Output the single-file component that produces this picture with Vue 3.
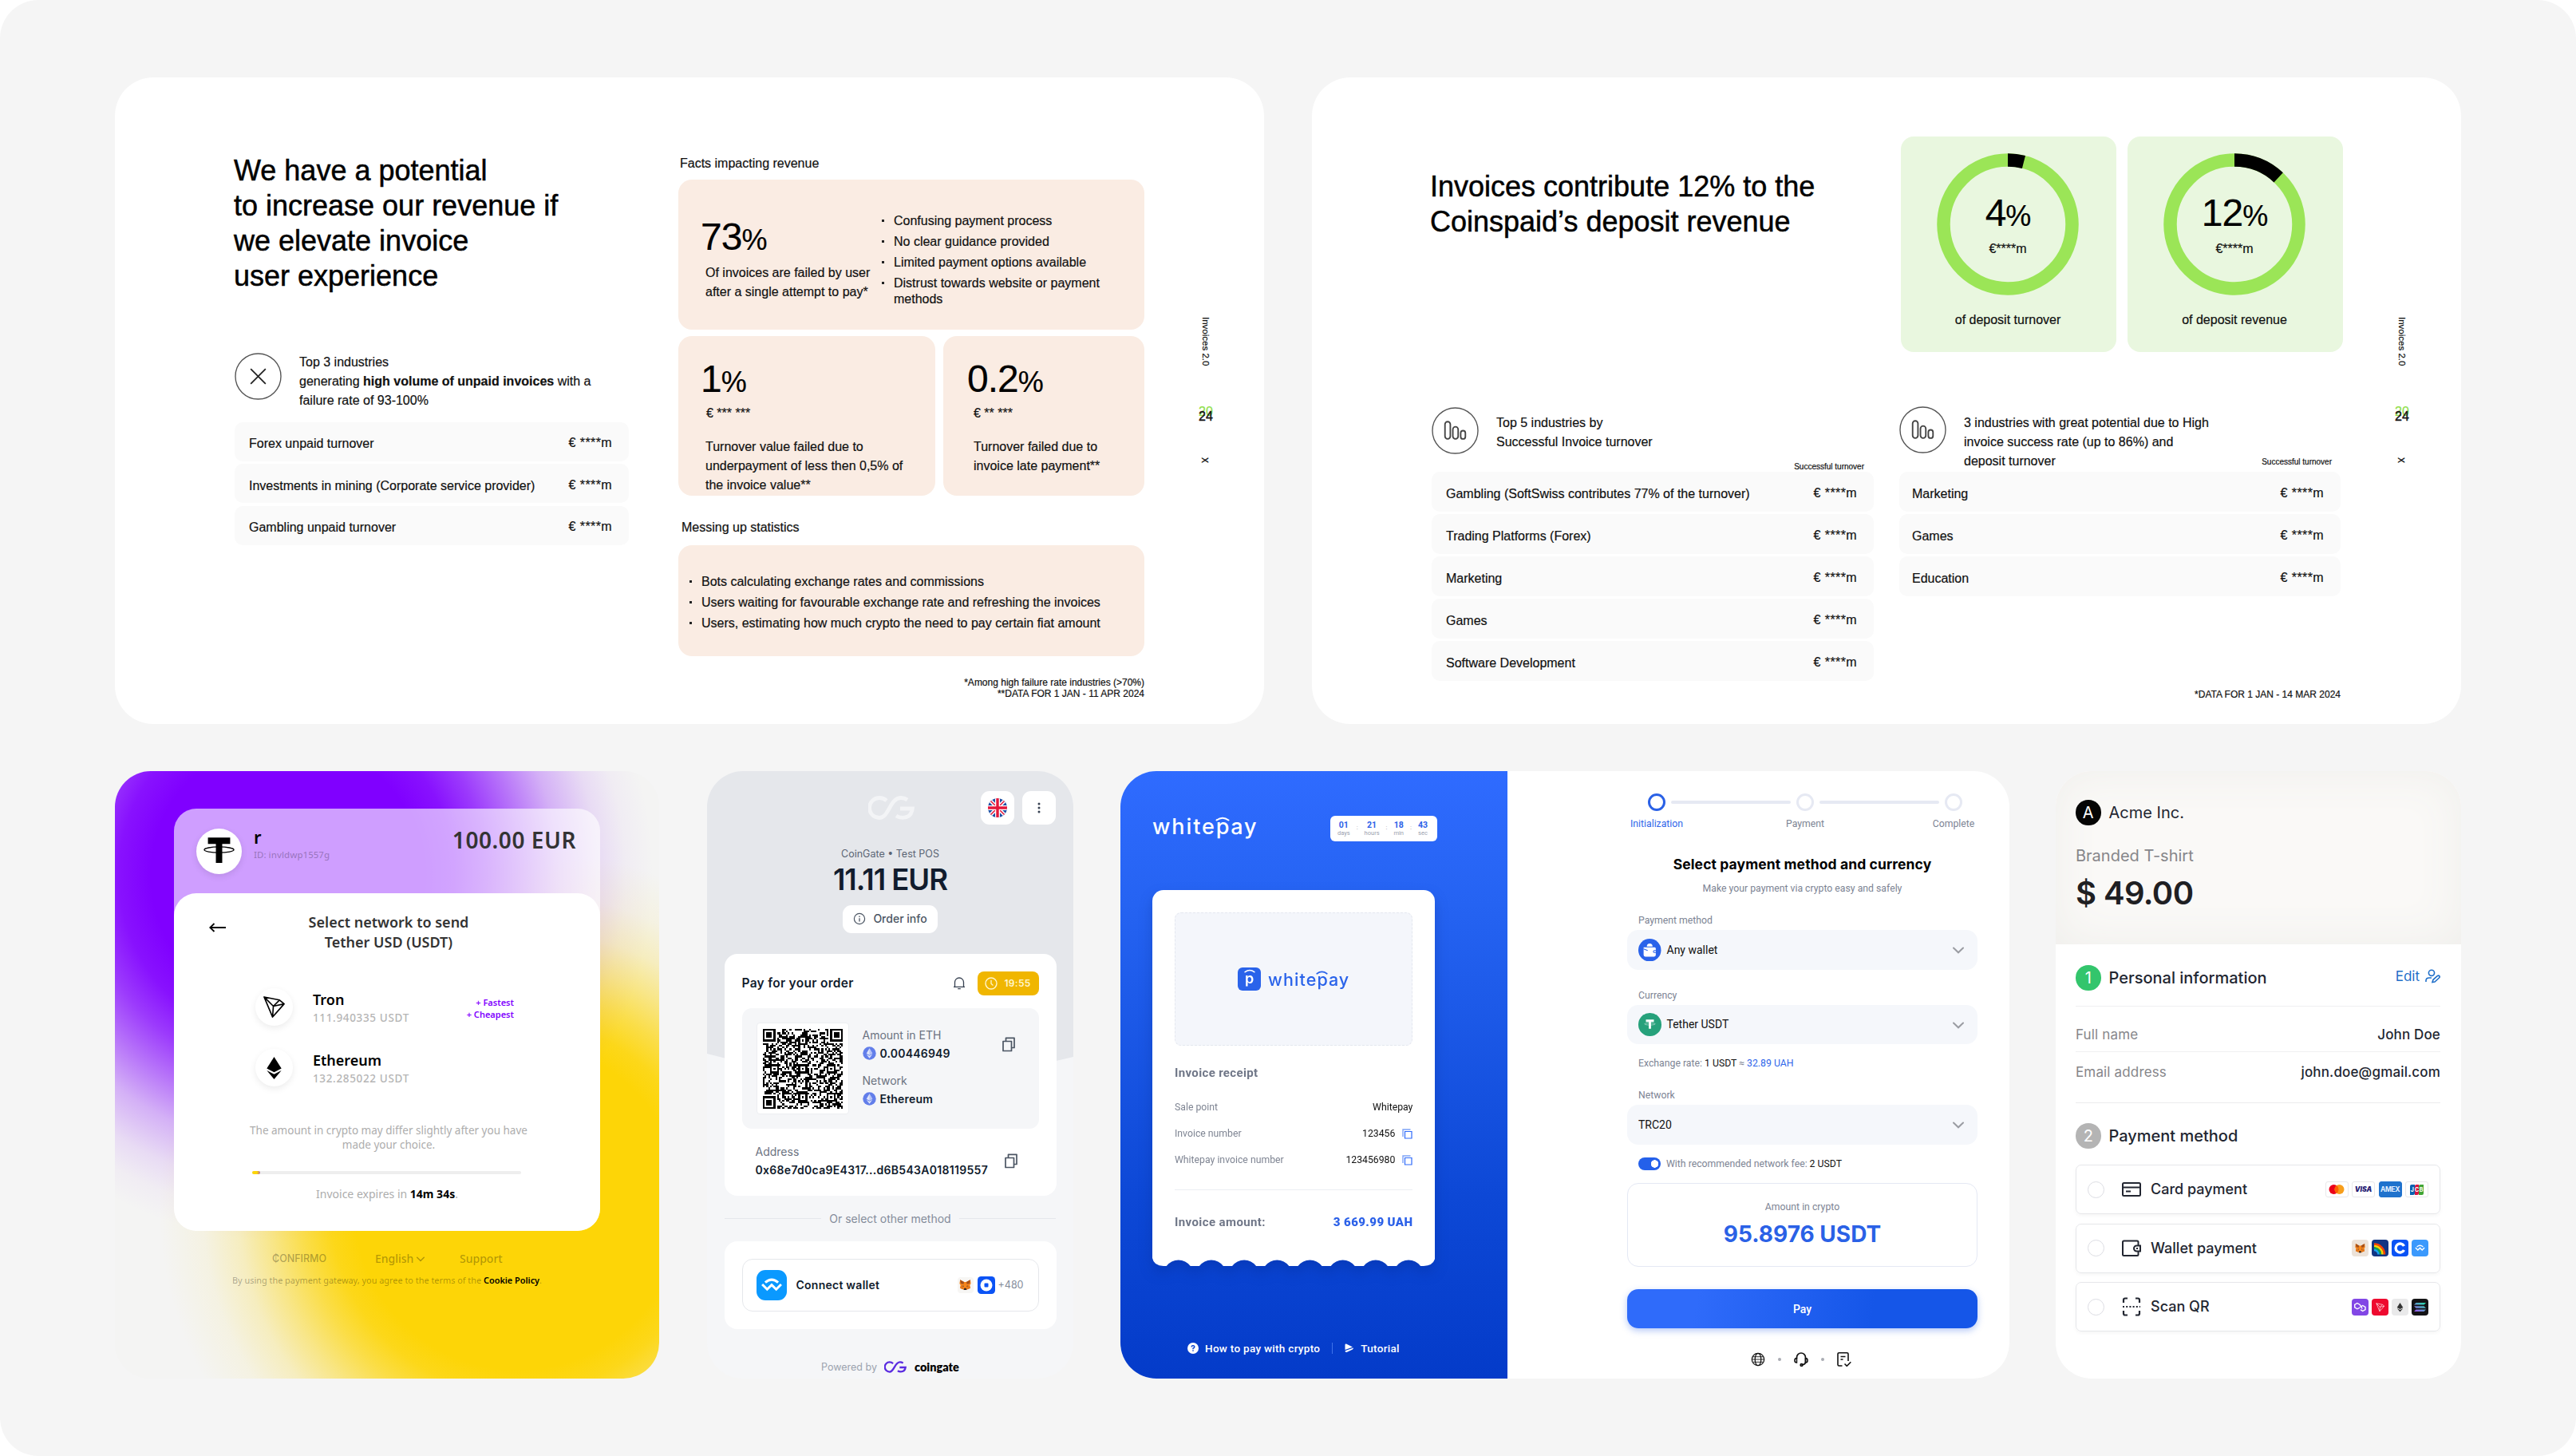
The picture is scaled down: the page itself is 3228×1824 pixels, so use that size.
<script setup>
const unpaid = [
  'Forex unpaid turnover',
  'Investments in mining (Corporate service provider)',
  'Gambling unpaid turnover'
];

const topIndustries = [
  'Gambling (SoftSwiss contributes 77% of the turnover)',
  'Trading Platforms (Forex)',
  'Marketing',
  'Games',
  'Software Development'
];

const potentialIndustries = ['Marketing', 'Games', 'Education'];

const rings = [
  { value: 4, label: 'of deposit turnover' },
  { value: 12, label: 'of deposit revenue' }
];

const networks = [
  { name: 'Tron', amount: '111.940335 USDT', icon: 'tron', tags: ['+ Fastest', '+ Cheapest'] },
  { name: 'Ethereum', amount: '132.285022 USDT', icon: 'eth', tags: [] }
];

const countdown = [
  { value: '01', unit: 'days' },
  { value: '21', unit: 'hours' },
  { value: '18', unit: 'min' },
  { value: '43', unit: 'sec' }
];

const steps = ['Initialization', 'Payment', 'Complete'];

const RING_RADIUS = 80.5;
const RING_LENGTH = 2 * Math.PI * RING_RADIUS;

function ringDash(value) {
  const part = (value / 100) * RING_LENGTH;
  return `${part} ${RING_LENGTH - part}`;
}

// Scalloped bottom edge of the receipt
function receiptEdge() {
  let d = 'M0 0H354.4V4Q352 14 340 14';
  for (let i = 7; i >= 0; i--) {
    const cx = 32.7 + i * 41.2;
    d += `H${(cx + 15).toFixed(1)}A18.8 18.8 0 0 0 ${(cx - 15).toFixed(1)} 14`;
  }
  return `${d}H14Q2 14 0 4Z`;
}

// Version 7 sized symbol: 45 modules, finders in three corners, alignment marks at 6/22/38
function buildQr() {
  const size = 45;
  let seed = 20417;
  const random = () => {
    seed = (seed * 1103515245 + 12345) % 2147483648;
    return seed / 2147483648;
  };
  const cells = Array.from({ length: size }, () =>
    Array.from({ length: size }, () => random() > 0.5)
  );
  const mark = (cx, cy, reach, isDark) => {
    for (let y = -reach; y <= reach; y++) {
      for (let x = -reach; x <= reach; x++) {
        const row = cells[cy + y];
        if (row && cx + x >= 0 && cx + x < size) {
          row[cx + x] = isDark(Math.max(Math.abs(x), Math.abs(y)));
        }
      }
    }
  };
  [[22, 6], [6, 22], [22, 22], [38, 22], [22, 38], [38, 38]].forEach(([x, y]) => {
    mark(x, y, 2, (r) => r !== 1);
  });
  [[3, 3], [41, 3], [3, 41]].forEach(([x, y]) => {
    mark(x, y, 4, (r) => r < 2 || r === 3);
  });
  let d = '';
  cells.forEach((row, y) => {
    row.forEach((on, x) => {
      if (on) d += `M${x} ${y}h1v1h-1z`;
    });
  });
  return d;
}

const edgePath = receiptEdge();
const qrPath = buildQr();
</script>

<template>
  <svg class="sprite" aria-hidden="true">
    <symbol id="tron" viewBox="0 0 30 30">
      <path d="M2 2L22 6L28 11L13 28ZM2 2L14 14L13 28M14 14L28 11M14 14L22 6" fill="none" stroke="currentColor" stroke-width="1.7" stroke-linejoin="round" />
    </symbol>
    <symbol id="eth" viewBox="0 0 30 30">
      <path d="M15 1L5.5 16L15 21L24.5 16Z" fill="currentColor" />
      <path d="M5.5 18.5L15 30L24.5 18.5L15 23.5Z" fill="currentColor" />
    </symbol>
    <symbol id="coin-eth" viewBox="0 0 18 18">
      <circle cx="9" cy="9" r="8.7" fill="#627eea" />
      <path d="M9 2.5L5 9.2L9 11.5L13 9.2Z" fill="#dfe5fb" />
      <path d="M5 10.2L9 15.7L13 10.2L9 12.5Z" fill="#dfe5fb" />
      <path d="M9 2.5V11.5L13 9.2Z" fill="#b5c2f6" />
    </symbol>
    <symbol id="bars" viewBox="0 0 60 60">
      <circle cx="30" cy="30" r="29" fill="#fff" stroke="#555" stroke-width="1.4" />
      <g fill="none" stroke="#444" stroke-width="1.9">
        <rect x="17" y="18.500" width="6.800" height="22" rx="3.400" />
        <rect x="27" y="25" width="6.800" height="15.500" rx="3.400" />
        <rect x="37" y="30" width="6" height="10.500" rx="3" />
      </g>
    </symbol>
    <symbol id="copy" viewBox="0 0 16 19">
      <path d="M1 5.5H11.5V17.5H1ZM4.5 5V1.3H15V13.5H12" fill="none" stroke="currentColor" stroke-width="1.7" stroke-linejoin="round" />
    </symbol>
    <symbol id="copy-small" viewBox="0 0 13 13">
      <path d="M3.5 3.5H12V12H3.5Z" fill="none" stroke="#2f6bfa" stroke-width="1.2" />
      <path d="M1 10V1H10.5" fill="none" stroke="#7ea3f8" stroke-width="1.4" />
    </symbol>
    <symbol id="cg" viewBox="0 0 58 30">
      <path d="M23 6Q19 2.500 14 2.500A12.500 12.500 0 0 0 14 27.500C26 27.500 27 2.500 41 2.500Q45.500 2.500 49 5M40 16H55.300Q54 27.300 43 27.300Q38.500 27.300 35 25" fill="none" stroke="currentColor" stroke-width="4.800" />
    </symbol>
    <symbol id="walletconnect" viewBox="0 0 40 40">
      <path d="M11.5 16.5Q20 9 28.5 16.5" fill="none" stroke="#fff" stroke-width="3.2" />
      <path d="M7.5 19L14 25.5L20 19.7L26 25.5L32.5 19" fill="none" stroke="#fff" stroke-width="3.2" />
    </symbol>
    <symbol id="fox" viewBox="0 0 24 24">
      <path d="M3 3L10 7H14L21 3L22 10L20 13L21 18L16 20L14 21H10L8 20L3 18L4 13L2 10Z" fill="#f6851b" />
      <path d="M3 3L10 7L9 11L4 10ZM21 3L14 7L15 11L20 10Z" fill="#a4501b" />
      <path d="M4 13L9 15L8 20L3 18ZM20 13L15 15L16 20L21 18Z" fill="#e2761b" />
      <path d="M7.5 13L10 14.5L8 15ZM16.5 13L14 14.5L16 15Z" fill="#233447" />
      <path d="M10 18H14L14.5 21H9.5Z" fill="#3b2a25" />
    </symbol>
    <symbol id="tether" viewBox="0 0 40 40">
      <path d="M9.5 7H30.5V13H23V31H17V13H9.5Z" fill="currentColor" />
      <ellipse cx="20" cy="18.5" rx="14" ry="2.7" fill="none" stroke="currentColor" stroke-width="1" />
    </symbol>
    <symbol id="chevron" viewBox="0 0 14 9">
      <path d="M1 1.5L7 7.3L13 1.5" fill="none" stroke="currentColor" stroke-width="2" stroke-linecap="round" />
    </symbol>
  </svg>

  <main class="board">
    <section class="row slides">
      <article class="slide">
        <div class="slide-main">
          <h1>We have a potential<br>to increase our revenue if<br>we elevate invoice<br>user experience</h1>
          <div class="intro unpaid-intro">
            <svg class="round-icon" viewBox="0 0 60 60">
              <circle cx="30" cy="30" r="29" fill="none" stroke="#555" stroke-width="1.4" />
              <path d="M20.5 20.5L39.5 39.5M39.5 20.5L20.5 39.5" stroke="#222" stroke-width="1.8" />
            </svg>
            <p>Top 3 industries<br>generating <b>high volume of unpaid invoices</b> with a<br>failure rate of 93-100%</p>
          </div>
          <ul class="rows unpaid-rows">
            <li v-for="name in unpaid" :key="name"><span>{{ name }}</span><em>€ ****m</em></li>
          </ul>
        </div>

        <div class="facts">
          <h2>Facts impacting revenue</h2>
          <div class="peach peach-wide">
            <div>
              <div class="stat">73<small>%</small></div>
              <p class="stat-text">Of invoices are failed by user<br>after a single attempt to pay*</p>
            </div>
            <ul class="bullets">
              <li>Confusing payment process</li>
              <li>No clear guidance provided</li>
              <li>Limited payment options available</li>
              <li>Distrust towards website or payment<br>methods</li>
            </ul>
          </div>
          <div class="peach-pair">
            <div class="peach peach-left">
              <div class="stat">1<small>%</small></div>
              <p class="stat-sum">€ *** ***</p>
              <p class="stat-text">Turnover value failed due to<br>underpayment of less then 0,5% of<br>the invoice value**</p>
            </div>
            <div class="peach peach-right">
              <div class="stat">0.2<small>%</small></div>
              <p class="stat-sum">€ ** ***</p>
              <p class="stat-text">Turnover failed due to<br>invoice late payment**</p>
            </div>
          </div>
          <h2 class="second">Messing up statistics</h2>
          <div class="peach peach-stats">
            <ul class="bullets">
              <li>Bots calculating exchange rates and commissions</li>
              <li>Users waiting for favourable exchange rate and refreshing the invoices</li>
              <li>Users, estimating how much crypto the need to pay certain fiat amount</li>
            </ul>
          </div>
          <p class="footnote">*Among high failure rate industries (&gt;70%)<br>**DATA FOR 1 JAN - 11 APR 2024</p>
        </div>

        <aside class="rail">
          <span class="rail-name">Invoices 2.0</span>
          <span class="rail-year"><i>20</i><b>24</b></span>
          <span class="rail-x">x</span>
        </aside>
      </article>

      <article class="slide">
        <div class="slide-main share">
          <h1>Invoices contribute 12% to the<br>Coinspaid’s deposit revenue</h1>
          <div class="intro share-intro">
            <svg class="round-icon"><use href="#bars" /></svg>
            <p>Top 5 industries by<br>Successful Invoice turnover</p>
          </div>
          <p class="tiny">Successful turnover</p>
          <ul class="rows share-rows">
            <li v-for="name in topIndustries" :key="name"><span>{{ name }}</span><em>€ ****m</em></li>
          </ul>
        </div>

        <div class="deposits">
          <div class="rings">
            <div v-for="ring in rings" :key="ring.label" class="ring-card">
              <div class="ring">
                <svg viewBox="0 0 178 178">
                  <circle cx="89" cy="89" :r="RING_RADIUS" fill="none" stroke="#9be557" stroke-width="16.5" />
                  <circle cx="89" cy="89" :r="RING_RADIUS" fill="none" stroke="#000" stroke-width="16.5" :stroke-dasharray="ringDash(ring.value)" transform="rotate(-90 89 89)" />
                </svg>
                <div class="ring-text">
                  <div class="stat">{{ ring.value }}<small>%</small></div>
                  <p>€****m</p>
                </div>
              </div>
              <p class="ring-label">{{ ring.label }}</p>
            </div>
          </div>
          <div class="intro deposit-intro">
            <svg class="round-icon"><use href="#bars" /></svg>
            <p>3 industries with great potential due to High<br>invoice success rate (up to 86%) and<br>deposit turnover</p>
            <p class="tiny">Successful turnover</p>
          </div>
          <ul class="rows deposit-rows">
            <li v-for="name in potentialIndustries" :key="name"><span>{{ name }}</span><em>€ ****m</em></li>
          </ul>
          <p class="footnote">*DATA FOR 1 JAN - 14 MAR 2024</p>
        </div>

        <aside class="rail">
          <span class="rail-name">Invoices 2.0</span>
          <span class="rail-year"><i>20</i><b>24</b></span>
          <span class="rail-x">x</span>
        </aside>
      </article>
    </section>

    <section class="row gateways">
      <!-- Confirmo -->
      <article class="confirmo">
        <div class="cf-panel">
          <header>
            <span class="cf-logo"><svg><use href="#tether" /></svg></span>
            <div>
              <h3>r</h3>
              <p>ID: invldwp1557g</p>
            </div>
            <strong>100.00 EUR</strong>
          </header>
          <div class="cf-body">
            <div class="cf-head">
              <svg class="cf-back" viewBox="0 0 21 12"><path d="M6.5 1L1.2 6L6.5 11M1.5 6H21" fill="none" stroke="#000" stroke-width="1.8" /></svg>
              <h4>Select network to send<br>Tether USD (USDT)</h4>
            </div>
            <ul class="cf-networks">
              <li v-for="net in networks" :key="net.name">
                <span class="cf-coin"><svg><use :href="`#${net.icon}`" /></svg></span>
                <div>
                  <h5>{{ net.name }}</h5>
                  <p>{{ net.amount }}</p>
                </div>
                <div class="cf-tags"><span v-for="tag in net.tags" :key="tag">{{ tag }}</span></div>
              </li>
            </ul>
            <p class="cf-note">The amount in crypto may differ slightly after you have<br>made your choice.</p>
            <div class="cf-progress"><i></i></div>
            <p class="cf-expires">Invoice expires in <b>14m 34s</b>.</p>
          </div>
        </div>
        <nav>
          <span class="cf-brand">₵ONFIRMO</span>
          <span class="cf-lang">English <svg><use href="#chevron" /></svg></span>
          <span>Support</span>
        </nav>
        <p class="cf-terms">By using the payment gateway, you agree to the terms of the <b>Cookie Policy</b>.</p>
      </article>

      <!-- CoinGate -->
      <article class="coingate">
        <svg class="cg-backdrop" viewBox="0 0 459 390" preserveAspectRatio="none"><path d="M0 0H459V358Q230 416 0 354Z" fill="#e5e7eb" /></svg>
        <header>
          <svg class="cg-mark"><use href="#cg" /></svg>
          <span class="cg-button">
            <svg class="flag" viewBox="0 0 24 24">
              <clipPath id="flag-clip"><circle cx="12" cy="12" r="12" /></clipPath>
              <g clip-path="url(#flag-clip)">
                <path d="M0 0H24V24H0Z" fill="#1e4ea3" />
                <path d="M0 0L24 24M24 0L0 24" stroke="#fff" stroke-width="4.5" />
                <path d="M0 0L24 24M24 0L0 24" stroke="#e4163a" stroke-width="1.5" />
                <path d="M12 0V24M0 12H24" stroke="#fff" stroke-width="6" />
                <path d="M12 0V24M0 12H24" stroke="#e4163a" stroke-width="3.4" />
              </g>
            </svg>
          </span>
          <span class="cg-button">
            <svg class="dots" viewBox="0 0 4 14"><g fill="#374151"><circle cx="2" cy="2" r="1.5" /><circle cx="2" cy="7" r="1.5" /><circle cx="2" cy="12" r="1.5" /></g></svg>
          </span>
        </header>
        <p class="cg-pos">CoinGate • Test POS</p>
        <p class="cg-total">11.11 EUR</p>
        <span class="cg-info">
          <svg viewBox="0 0 16 16"><circle cx="8" cy="8" r="6.6" fill="none" stroke="currentColor" stroke-width="1.2" /><path d="M8 7.3V11.5M8 4.5V5.9" stroke="currentColor" stroke-width="1.3" /></svg>
          Order info
        </span>

        <div class="cg-panel">
          <div class="cg-title">
            <h3>Pay for your order</h3>
            <svg class="bell" viewBox="0 0 16 16"><path d="M2.5 12V6.5A5.5 5.5 0 0 1 13.5 6.5V12M1 12.3H15M6.2 14.7H9.8" fill="none" stroke="currentColor" stroke-width="1.3" /></svg>
            <span class="cg-timer">
              <svg viewBox="0 0 16 16"><circle cx="8" cy="8" r="7" fill="none" stroke="currentColor" stroke-width="1.4" /><path d="M8 3.8V8.3L10.5 10.5" fill="none" stroke="currentColor" stroke-width="1.3" /></svg>
              19:55
            </span>
          </div>
          <div class="cg-pay">
            <div class="qr"><svg viewBox="0 0 45 45" shape-rendering="crispEdges"><path :d="qrPath" /></svg></div>
            <dl>
              <dt>Amount in ETH</dt>
              <dd class="num"><svg><use href="#coin-eth" /></svg>0.00446949</dd>
              <dt>Network</dt>
              <dd><svg><use href="#coin-eth" /></svg>Ethereum</dd>
            </dl>
            <svg class="copy"><use href="#copy" /></svg>
          </div>
          <div class="cg-address">
            <div>
              <p>Address</p>
              <strong>0x68e7d0ca9E4317...d6B543A018119557</strong>
            </div>
            <svg class="copy"><use href="#copy" /></svg>
          </div>
        </div>

        <p class="cg-or"><i></i>Or select other method<i></i></p>

        <div class="cg-panel cg-wallet">
          <div class="cg-connect">
            <svg class="wc"><use href="#walletconnect" /></svg>
            <strong>Connect wallet</strong>
            <span class="fox"><svg><use href="#fox" /></svg></span>
            <svg class="coinbase" viewBox="0 0 22 22"><rect width="22" height="22" rx="4.5" fill="#0b53f5" /><circle cx="11" cy="11" r="7.5" fill="#fff" /><rect x="8.5" y="8.5" width="5" height="5" rx="1" fill="#0b53f5" /></svg>
            <small>+480</small>
          </div>
        </div>
        <p class="cg-powered">Powered by <svg><use href="#cg" /></svg><b>coingate</b></p>
      </article>

      <!-- Whitepay -->
      <article class="whitepay">
        <div class="wp-side">
          <header>
            <span class="wp-word">white<span class="hat">p<svg viewBox="0 0 18 6"><path d="M1.5 4.5Q9 -1 16.5 4.5" fill="none" stroke="currentColor" stroke-width="2" stroke-linecap="round" /></svg></span>ay</span>
            <div class="wp-count">
              <template v-for="(part, i) in countdown" :key="part.unit">
                <i v-if="i">:</i>
                <div><b>{{ part.value }}</b><span>{{ part.unit }}</span></div>
              </template>
            </div>
          </header>
          <div class="receipt">
            <div class="receipt-body">
              <div class="receipt-logo">
                <span class="wp-badge"><span class="hat">p<svg viewBox="0 0 18 6"><path d="M1.5 4.5Q9 -1 16.5 4.5" fill="none" stroke="currentColor" stroke-width="2" stroke-linecap="round" /></svg></span></span>
                <span class="wp-word">white<span class="hat">p<svg viewBox="0 0 18 6"><path d="M1.5 4.5Q9 -1 16.5 4.5" fill="none" stroke="currentColor" stroke-width="2" stroke-linecap="round" /></svg></span>ay</span>
              </div>
              <h4>Invoice receipt</h4>
              <ul>
                <li>Sale point <b>Whitepay</b></li>
                <li>Invoice number <b>123456 <svg><use href="#copy-small" /></svg></b></li>
                <li>Whitepay invoice number <b>123456980 <svg><use href="#copy-small" /></svg></b></li>
              </ul>
              <p class="receipt-total">Invoice amount: <b>3 669.99 UAH</b></p>
            </div>
            <svg class="receipt-edge" viewBox="0 0 354.4 14"><path :d="edgePath" fill="#fff" /></svg>
          </div>
          <footer>
            <svg class="help" viewBox="0 0 14 14"><circle cx="7" cy="7" r="7" fill="#fff" /><path d="M5 5.5Q5.200 3.700 7.100 3.800Q9 4 8.800 5.500Q8.600 6.500 7 7.200V8.300M7 9.300V10.700" fill="none" stroke="#0b45d0" stroke-width="1.4" /></svg>
            <span>How to pay with crypto</span>
            <i></i>
            <svg class="play" viewBox="0 0 11 12"><path d="M.5 1.5Q.8 0 2.5 .8L10 4.5L.5 8ZM.5 9.3L11 5.5Q11 7 9.5 7.7L2.5 11Q.8 11.5 .5 9.3Z" fill="#fff" /></svg>
            <span>Tutorial</span>
          </footer>
        </div>

        <div class="wp-form">
          <div class="stepper">
            <template v-for="(step, i) in steps" :key="step">
              <i v-if="i"></i>
              <div :class="{ active: i === 0 }"><b></b><span>{{ step }}</span></div>
            </template>
          </div>
          <h3>Select payment method and currency</h3>
          <p class="wp-sub">Make your payment via crypto easy and safely</p>
          <label>Payment method</label>
          <div class="select">
            <svg class="select-icon" viewBox="0 0 28 28"><circle cx="14" cy="14" r="14" fill="#2a63ea" /><path d="M10.5 9.5A3.5 3.5 0 0 1 17.5 9.5ZM6.5 10.5H20Q21.5 10.5 21.5 12V20Q21.5 22 19.5 22H8.5Q6.5 22 6.5 20Z" fill="#fff" /><path d="M22 14.5H19.5A1.3 1.3 0 0 0 19.5 17H22M6.5 12.5L9 13.5L11.5 14.5" fill="none" stroke="#2a63ea" stroke-width="1" /></svg>
            Any wallet
            <svg class="chevron"><use href="#chevron" /></svg>
          </div>
          <label class="l2">Currency</label>
          <div class="select">
            <span class="select-icon usdt"><svg><use href="#tether" /></svg></span>
            Tether USDT
            <svg class="chevron"><use href="#chevron" /></svg>
          </div>
          <p class="rate">Exchange rate: <b>1 USDT</b> ≈ <em>32.89 UAH</em></p>
          <label>Network</label>
          <div class="select">TRC20 <svg class="chevron"><use href="#chevron" /></svg></div>
          <p class="fee"><i></i>With recommended network fee: <b>2 USDT</b></p>
          <div class="crypto"><p>Amount in crypto</p><strong>95.8976 USDT</strong></div>
          <div class="pay">Pay</div>
          <div class="wp-icons">
            <svg viewBox="0 0 18 18"><g fill="none" stroke="#111" stroke-width="1.200"><circle cx="9" cy="9" r="7.700" /><ellipse cx="9" cy="9" rx="3.800" ry="7.700" /><path d="M1.300 9H16.700M2.500 5.700H15.500M2.500 12.300H15.500" stroke-width=".9" /></g></svg>
            <i></i>
            <svg viewBox="0 0 18 18"><g fill="none" stroke="#111" stroke-width="1.7"><path d="M3.5 8V6.5A5.5 5.5 0 0 1 14.5 6.5V12.5Q14.5 15 11 15.7" /><path d="M3.5 7.5V13Q.9 13 .9 10.2Q.9 7.5 3.5 7.5ZM14.5 7.5V13Q17.1 13 17.1 10.2Q17.1 7.5 14.5 7.5Z" stroke-width="1.5" /><circle cx="9.5" cy="16" r="1.3" /></g></svg>
            <i></i>
            <svg viewBox="0 0 18 18"><path d="M6.5 17H2.5Q1 17 1 15.5V2Q1 .8 2.5 .8H12.5Q14 .8 14 2V11M4.5 5.5H10.5M4.5 9H7.5M9.5 14.5L12.3 17.3L17.3 12.3" fill="none" stroke="#111" stroke-width="1.6" /></svg>
          </div>
        </div>
      </article>

      <!-- Acme checkout -->
      <article class="acme">
        <header>
          <div class="ac-head"><span class="ac-dot black">A</span>Acme Inc.</div>
          <p>Branded T-shirt</p>
          <strong>$ 49.00</strong>
        </header>
        <div class="ac-body">
          <div class="ac-head">
            <span class="ac-dot green">1</span>Personal information
            <span class="ac-edit">Edit <svg viewBox="0 0 19 18"><g fill="none" stroke="currentColor" stroke-width="1.6"><circle cx="8" cy="4.8" r="3.6" /><path d="M1 16V14.5Q1 11 5 11H8M9 16.5L10 13.3L15.5 8.5Q17 7.5 18 9Q18.5 10.2 17.5 11L12 16Z" /></g></svg></span>
          </div>
          <dl>
            <div><dt>Full name</dt><dd>John Doe</dd></div>
            <div><dt>Email address</dt><dd>john.doe@gmail.com</dd></div>
          </dl>
          <div class="ac-head method"><span class="ac-dot gray">2</span>Payment method</div>
          <ul class="ac-methods">
            <li>
              <i></i>
              <svg viewBox="0 0 24 24"><path d="M2.5 4H21.5Q23 4 23 5.5V18.5Q23 20 21.5 20H2.5Q1 20 1 18.5V5.5Q1 4 2.5 4ZM1 9.5H23M5 14.5H11" fill="none" stroke="currentColor" stroke-width="2" /></svg>
              <span>Card payment</span>
              <div class="cards">
                <span><svg viewBox="0 0 20 14"><circle cx="6.5" cy="7" r="6" fill="#eb001b" /><circle cx="13.5" cy="7" r="6" fill="#f79e1b" /><path d="M10 2.1A6 6 0 0 1 10 11.9A6 6 0 0 1 10 2.1Z" fill="#ff5f00" /></svg></span>
                <span class="visa">VISA</span>
                <span class="amex">AMEX</span>
                <span class="jcb"><b>J</b><b>C</b><b>B</b></span>
              </div>
            </li>
            <li>
              <i></i>
              <svg viewBox="0 0 24 24"><path d="M20.5 8V4Q20.5 2.5 19 2.5H2.5Q1 2.5 1 4V19.5Q1 21 2.5 21H19Q20.5 21 20.5 19.5V16" fill="none" stroke="currentColor" stroke-width="2" /><path d="M23 8.5V15.5H18.5A3.5 3.5 0 0 1 18.5 8.5ZM18 12H20" fill="none" stroke="currentColor" stroke-width="2" /></svg>
              <span>Wallet payment</span>
              <div class="tiles">
                <svg viewBox="0 0 21 21"><rect width="21" height="21" rx="4" fill="#ece2d8" /><use href="#fox" x="3" y="3" width="15" height="15" /></svg>
                <svg viewBox="0 0 21 21"><rect width="21" height="21" rx="4" fill="#123583" /><g fill="none" stroke-width="2.5"><path d="M3 5.5A13 13 0 0 1 16 18.5" stroke="#ff4000" /><path d="M3 8A10.5 10.5 0 0 1 13.5 18.5" stroke="#ffd400" /><path d="M3 10.5A8 8 0 0 1 11 18.5" stroke="#10a64a" /><path d="M3 13A5.5 5.5 0 0 1 8.5 18.5" stroke="#1aa5f0" /></g></svg>
                <svg viewBox="0 0 21 21"><rect width="21" height="21" rx="4" fill="#0b53f5" /><path d="M15.5 8A5.5 5.5 0 1 0 15.5 13" fill="none" stroke="#fff" stroke-width="3.4" /></svg>
                <svg viewBox="0 0 21 21"><rect width="21" height="21" rx="4" fill="#3b99fc" /><use href="#walletconnect" x="1.5" y="1.5" width="18" height="18" /></svg>
              </div>
            </li>
            <li>
              <i></i>
              <svg viewBox="0 0 24 24"><path d="M7 1.5H4Q2 1.5 2 3.5V7M17 1.5H20Q22 1.5 22 3.5V7M7 22.5H4Q2 22.5 2 20.5V17M17 22.5H20Q22 22.5 22 20.5V17" fill="none" stroke="currentColor" stroke-width="2.2" /><path d="M1 12H23" stroke="currentColor" stroke-width="2" stroke-dasharray="2 2.2" /></svg>
              <span>Scan QR</span>
              <div class="tiles">
                <svg viewBox="0 0 21 21"><rect width="21" height="21" rx="4" fill="#8247e5" /><g fill="none" stroke="#fff" stroke-width="1.4"><path d="M10.5 11.5L7.2 13.3L4 11.3V8L7.2 6L10.5 8L13.5 13" transform="translate(-.3 -.5)" /><path d="M10.5 10.5L13.7 8.5L17 10.5V13.5L13.7 15.5L11 13.7" /></g></svg>
                <svg class="white" viewBox="0 0 21 21"><rect width="21" height="21" rx="4" fill="#ee0a2f" /><use href="#tron" x="5" y="5" width="11.5" height="11.5" /></svg>
                <svg class="ink" viewBox="0 0 21 21"><rect width="21" height="21" rx="4" fill="#e9e9ea" /><use href="#eth" x="4.5" y="4" width="12" height="13" /></svg>
                <svg viewBox="0 0 21 21"><defs><linearGradient id="sol" x1="0" y1="1" x2="1" y2="0"><stop offset="0" stop-color="#a44cf5" /><stop offset="1" stop-color="#1ce8a5" /></linearGradient></defs><rect width="21" height="21" rx="4" fill="#141416" /><path d="M5.5 5H18L15.5 7.5H3ZM3 9.3H15.5L18 11.8H5.5ZM5.5 13.5H18L15.5 16H3Z" fill="url(#sol)" /></svg>
              </div>
            </li>
          </ul>
        </div>
      </article>
    </section>
  </main>
</template>

<style>
body {
  background: #fff;
}
</style>

<style scoped>
* {
  box-sizing: border-box;
  margin: 0;
  padding: 0;
  list-style: none;
  font-style: normal;
  white-space: nowrap;
}

.sprite {
  position: absolute;
  width: 0;
  height: 0;
}

.board {
  width: 3228px;
  height: 1824px;
  padding: 97px 144px;
  background: #f5f5f5;
  border-radius: 48px;
}

.row {
  display: flex;
}

.slides {
  gap: 60px;
}

.gateways {
  gap: 59px;
  margin-top: 59px;
}

/* ---------- slides ---------- */
.slide {
  display: flex;
  width: 1440px;
  height: 810px;
  background: #fff;
  border-radius: 48px;
  color: #111;
  font: 16px/24px "Liberation Sans", Arial, sans-serif;
  -webkit-text-stroke: 0.2px currentColor;
}

.slide-main {
  width: 494px;
  margin-left: 150px;
  padding-top: 94.500px;
}

.slide h1 {
  margin-left: -1px;
  color: #000;
  font-size: 36px;
  font-weight: 400;
  line-height: 44px;
  -webkit-text-stroke: 0.5px #000;
}

.slide h2 {
  margin-left: 2px;
  font-size: 16px;
  font-weight: 400;
  line-height: 20px;
}

.intro {
  display: flex;
  gap: 22px;
}

.round-icon {
  flex: none;
  width: 59px;
  height: 59px;
}

.unpaid-intro {
  margin-top: 74px;
}

.intro b {
  letter-spacing: 0;
}

.rows {
  display: flex;
  flex-direction: column;
  gap: 3.7px;
}

.rows li {
  display: flex;
  justify-content: space-between;
  height: 49px;
  padding: 15.500px 21px 0 18px;
  border-radius: 10px;
  background: #fafafa;
}

.rows em {
  margin-top: -1px;
  letter-spacing: 0.4px;
}

.unpaid-rows {
  margin-top: 15px;
}

.facts {
  width: 584px;
  margin-left: 62px;
  padding-top: 98px;
}

.peach {
  border-radius: 17px;
  background: #faece3;
}

.peach-wide {
  display: grid;
  grid-template-columns: 255px 1fr;
  height: 188px;
  margin-top: 10px;
  padding-top: 48px;
}

.stat {
  height: 48px;
  margin-left: 28px;
  color: #000;
  font-size: 48px;
  line-height: 48px;
  letter-spacing: -1px;
}

.stat small {
  font-size: 36px;
  line-height: 0;
}

.stat-text {
  margin: 9px 0 0 34px;
}

.bullets {
  display: flex;
  flex-direction: column;
  gap: 6px;
  line-height: 20px;
}

.bullets li {
  display: flex;
  gap: 12px;
}

.bullets li::before {
  content: '';
  width: 3px;
  height: 3px;
  margin-top: 8px;
  background: #222;
}

.peach-wide .bullets {
  margin-top: -6px;
}

.peach-pair {
  display: grid;
  grid-template-columns: 322px 252px;
  gap: 10px;
  height: 200px;
  margin-top: 8px;
}

.peach-pair .peach {
  height: 200px;
  padding-top: 30px;
}

.peach-pair .stat-sum {
  margin: 9px 0 0 35px;
  line-height: 20px;
}

.peach-pair .stat-text {
  margin-top: 20px;
}

.peach-right .stat {
  margin-left: 30px;
}

.peach-pair .peach-right .stat-sum,
.peach-right .stat-text {
  margin-left: 38px;
}

.slide h2.second {
  margin: 30px 0 0 4px;
}

.peach-stats {
  height: 139px;
  margin-top: 12px;
  padding: 36px 0 0 14px;
}

.footnote {
  margin-top: 26px;
  font-size: 12px;
  line-height: 14px;
  text-align: right;
}

.rail {
  display: flex;
  flex-direction: column;
  align-items: center;
  width: 24px;
  margin-left: 65px;
  padding-top: 300px;
}

.rail-name {
  height: 62px;
  font-size: 11.5px;
  line-height: 24px;
  writing-mode: vertical-rl;
}

.rail-year {
  display: flex;
  flex-direction: column;
  margin-top: 54px;
  font-size: 16px;
  line-height: 5.5px;
}

.rail-year i {
  color: #8fe04a;
}

.rail-year b {
  font-weight: 400;
  -webkit-text-stroke: 0.4px #111;
}

.rail-x {
  margin-top: 49px;
  font-size: 14px;
  line-height: 24px;
  writing-mode: vertical-rl;
}

.share {
  width: 554px;
  padding-top: 115px;
}

.share h1 {
  margin-left: -2px;
}

.share-intro {
  margin-top: 210px;
}

.share-intro p,
.deposit-intro p {
  margin-top: 8px;
}

.tiny {
  font-size: 10px;
  line-height: 12px;
}

.share > .tiny {
  margin: 10px 12px 0 0;
  text-align: right;
}

.share-rows {
  gap: 3px;
}

.share-rows li {
  height: 50px;
  padding-top: 16px;
}

.deposits {
  width: 554px;
  margin-left: 34px;
  padding-top: 74px;
}

.deposits + .rail {
  margin-left: 62px;
}

.rings {
  display: flex;
  gap: 14px;
}

.ring-card {
  display: flex;
  flex-direction: column;
  align-items: center;
  width: 270px;
  height: 270px;
  padding-top: 21px;
  border-radius: 16px;
  background: #e9f7df;
}

.ring {
  display: grid;
  width: 178px;
  height: 178px;
  margin-right: 2px;
}

.ring > * {
  grid-area: 1 / 1;
}

.ring-text {
  padding-top: 51px;
  text-align: center;
}

.ring-text .stat {
  margin-left: 0;
}

.ring-text p {
  margin-top: 11px;
  line-height: 20px;
}

.ring-label {
  margin: 21px 2px 0 0;
  line-height: 20px;
}

.deposit-intro {
  margin: 68px 0 0 -2px;
}

.deposit-intro p {
  margin-top: 9px;
}

.deposit-intro p.tiny {
  margin: 64px 14px 0 auto;
}

.deposit-rows {
  gap: 3px;
  width: 553px;
  margin: 1px 0 0 -2px;
}

.deposit-rows li {
  height: 50px;
  padding: 16px 21px 0 16px;
}

.deposits .footnote {
  margin: 116px 3px 0 0;
}

/* ---------- confirmo ---------- */
.gateways > article {
  position: relative;
  height: 761px;
  border-radius: 45px;
  overflow: hidden;
}

.confirmo {
  width: 682px;
  margin-right: 1px;
  padding: 47px 74px 0;
  background:
    radial-gradient(circle at 215px 130px, #8000ff 170px, rgba(128, 0, 255, 0.93) 210px, rgba(128, 0, 255, 0.76) 250px, rgba(128, 0, 255, 0.52) 295px, rgba(128, 0, 255, 0.28) 340px, rgba(128, 0, 255, 0.1) 390px, rgba(128, 0, 255, 0.03) 425px, rgba(128, 0, 255, 0) 460px),
    radial-gradient(circle at 505px 545px, #fdd507 205px, rgba(253, 213, 7, 0.92) 235px, rgba(253, 213, 7, 0.72) 270px, rgba(253, 213, 7, 0.46) 310px, rgba(253, 213, 7, 0.22) 350px, rgba(253, 213, 7, 0.07) 395px, rgba(253, 213, 7, 0) 450px),
    #f4f4f3;
  font: 14px/18px "Noto Sans", sans-serif;
}

.cf-panel {
  height: 529px;
  border-radius: 28px;
  background: rgba(255, 255, 255, 0.62);
}

.cf-panel header {
  display: flex;
  height: 106px;
  padding: 23px 30px 0 28px;
}

.cf-logo {
  display: grid;
  place-items: center;
  width: 57px;
  height: 57px;
  margin: 2px 15px 0 0;
  border-radius: 50%;
  background: #fff;
  box-shadow: 0 3px 8px rgba(0, 0, 0, 0.1);
}

.cf-logo svg {
  width: 53px;
  height: 53px;
}

.cf-panel h3 {
  font-size: 22px;
  font-weight: 600;
  line-height: 24px;
}

.cf-panel header p {
  margin-top: 3px;
  color: rgba(0, 0, 0, 0.26);
  font-size: 11.5px;
  line-height: 16px;
  font-weight: 500;
}

.cf-panel header strong {
  margin-left: auto;
  color: #333;
  font-size: 28px;
  font-weight: 600;
  line-height: 32px;
  letter-spacing: 0.55px;
}

.cf-body {
  height: 423px;
  padding-top: 24px;
  border-radius: 28px;
  background: #fff;
}

.cf-head {
  display: flex;
  padding-left: 44px;
}

.cf-back {
  width: 21px;
  height: 12px;
  margin-top: 13px;
}

.cf-head h4 {
  width: 408px;
  color: #333;
  font-size: 18px;
  font-weight: 600;
  line-height: 25px;
  text-align: center;
}

.cf-networks {
  display: flex;
  flex-direction: column;
  gap: 29px;
  margin: 45px 108px 0 102px;
}

.cf-networks li {
  display: flex;
  height: 47px;
}

.cf-coin {
  display: grid;
  place-items: center;
  width: 47px;
  height: 47px;
  margin-right: 25px;
  border-radius: 50%;
  box-shadow: 0 3px 9px rgba(0, 0, 0, 0.08);
}

.cf-coin svg {
  width: 29px;
  height: 29px;
}

.cf-networks h5 {
  margin-top: 2px;
  font-size: 18px;
  font-weight: 600;
  line-height: 24px;
}

.cf-networks p {
  margin-top: 2px;
  color: #b5b5b5;
  font-size: 13.5px;
  font-weight: 500;
  letter-spacing: 0.65px;
}

.cf-tags {
  display: flex;
  flex-direction: column;
  margin: 11px 0 0 auto;
  color: #8000ff;
  font-size: 11px;
  font-weight: 600;
  line-height: 14.5px;
  text-align: right;
}

.cf-note {
  margin: 46px 0 0 4px;
  color: #adadad;
  font-size: 13.5px;
  line-height: 18.3px;
  text-align: center;
}

.cf-progress {
  width: 337px;
  height: 4px;
  margin: 23px 0 0 98px;
  border-radius: 2px;
  background: #eee;
}

.cf-progress i {
  display: block;
  width: 10px;
  height: 4px;
  border-radius: 2px;
  background: linear-gradient(90deg, #fdd507 60%, #b06aa8);
}

.cf-expires {
  margin-top: 15px;
  color: #adadad;
  line-height: 20px;
  text-align: center;
}

.cf-expires b {
  color: #000;
  font-weight: 700;
}

.confirmo nav {
  display: flex;
  height: 20px;
  margin: 25px 0 0 123px;
  color: rgba(0, 0, 0, 0.3);
  font-weight: 500;
  line-height: 20px;
}

.cf-brand {
  width: 129px;
  font-family: "Inter", sans-serif;
  font-size: 12.5px;
}

.cf-lang {
  width: 106px;
}

.cf-lang svg {
  width: 10px;
  height: 7px;
  margin-bottom: 1px;
}

.cf-terms {
  margin-top: 9px;
  color: rgba(0, 0, 0, 0.32);
  font-size: 10.9px;
  line-height: 16px;
  text-align: center;
}

.cf-terms b {
  color: #000;
  font-weight: 600;
}

/* ---------- coingate ---------- */
.coingate {
  display: flex;
  flex-direction: column;
  align-items: center;
  width: 459px;
  background: #f5f6f8;
  color: #111c2d;
  font: 14px/18px "Inter", sans-serif;
}

.coingate > * {
  position: relative;
}

.coingate > .cg-backdrop {
  position: absolute;
  top: 0;
  left: 0;
  width: 459px;
  height: 390px;
}

.coingate header {
  display: flex;
  gap: 10px;
  width: 100%;
  padding: 25px 22px 0 202px;
}

.cg-mark {
  width: 58px;
  height: 30px;
  margin: 6px auto 0 0;
  color: #f3f4f6;
}

.cg-button {
  display: grid;
  place-items: center;
  width: 42px;
  height: 42px;
  border-radius: 11px;
  background: #fff;
}

.flag {
  width: 24px;
  height: 24px;
}

.dots {
  width: 4px;
  height: 14px;
}

.cg-pos {
  margin-top: 28.500px;
  color: #5a6473;
  font-size: 12.5px;
  line-height: 16px;
}

.cg-total {
  margin-top: 4px;
  font-size: 36.5px;
  font-weight: 600;
  line-height: 40px;
  letter-spacing: -1px;
}

.cg-info {
  display: flex;
  align-items: center;
  gap: 9px;
  height: 35px;
  margin-top: 12px;
  padding: 0 13px;
  border-radius: 11px;
  background: #fff;
  color: #4b5563;
  font-weight: 500;
}

.cg-info svg {
  width: 16px;
  height: 16px;
}

.cg-panel {
  width: 416px;
  height: 303px;
  margin-top: 26px;
  padding: 22px;
  border-radius: 16px;
  background: #fff;
}

.cg-title {
  display: flex;
  align-items: center;
  height: 30px;
}

.cg-title h3 {
  font-size: 15.5px;
  font-weight: 600;
  letter-spacing: 0.3px;
}

.bell {
  width: 16px;
  height: 16px;
  margin: 0 15px 0 auto;
  color: #374151;
}

.cg-timer {
  display: flex;
  align-items: center;
  gap: 9px;
  width: 77px;
  height: 30px;
  padding-left: 9px;
  border-radius: 8px;
  background: #f0b600;
  color: #fff6cf;
  font-size: 12px;
  font-weight: 600;
  letter-spacing: 0.3px;
}

.cg-timer svg {
  width: 16px;
  height: 16px;
}

.cg-pay {
  display: flex;
  height: 151px;
  margin-top: 16px;
  padding: 18px;
  border-radius: 12px;
  background: #f5f6f8;
}

.qr {
  width: 116px;
  height: 115px;
  padding: 7px;
  border: 1px solid #eceef1;
  border-radius: 4px;
  background: #fff;
}

.qr svg {
  display: block;
  width: 100px;
  height: 100px;
}

.coingate dl {
  margin: 7px 0 0 17px;
}

.coingate dt {
  color: #6b7280;
  font-size: 14px;
}

.coingate dd {
  display: flex;
  align-items: center;
  gap: 5px;
  margin: 4px 0 15px;
  font-size: 14px;
  font-weight: 600;
  line-height: 20px;
  letter-spacing: 0.2px;
}

.coingate dd svg {
  width: 17px;
  height: 17px;
}

.copy {
  width: 16px;
  height: 19px;
  margin: 18px 12px 0 auto;
  color: #4b5563;
}

.cg-address {
  display: flex;
  margin-top: 20px;
  padding-left: 17px;
}

.cg-address p {
  color: #6b7280;
}

.cg-address strong {
  display: block;
  margin-top: 4px;
  font-size: 14px;
  font-weight: 600;
  line-height: 20px;
  letter-spacing: 0.3px;
}

.cg-address .copy {
  margin: 11px 27px 0 auto;
}

.cg-or {
  display: flex;
  align-items: center;
  justify-content: space-between;
  width: 416px;
  margin-top: 20px;
  color: #848c9a;
}

.cg-or i {
  width: 121px;
  height: 1px;
  background: #e5e7eb;
}

.cg-wallet {
  height: 110px;
  margin-top: 19px;
}

.cg-connect {
  display: flex;
  align-items: center;
  height: 66px;
  padding: 0 18px 0 17px;
  border: 1px solid #e5e7eb;
  border-radius: 13px;
}

.cg-connect .wc {
  width: 38px;
  height: 38px;
  border-radius: 11px;
  background: #0a99ff;
}

.cg-connect strong {
  margin: 0 auto 0 12px;
  font-size: 14px;
  font-weight: 600;
  letter-spacing: 0.25px;
}

.cg-connect .fox {
  display: grid;
  place-items: center;
  width: 20px;
  height: 20px;
  border-radius: 4px;
  background: #f7f6f4;
}

.cg-connect .fox svg {
  width: 17px;
  height: 17px;
}

.coinbase {
  width: 22px;
  height: 22px;
  margin: 0 4px 0 5px;
}

.cg-connect small {
  color: #848c9a;
  font-size: 12.5px;
}

.cg-powered {
  display: flex;
  align-items: center;
  margin-top: 40px;
  color: #9ca3af;
  font-size: 12.5px;
  line-height: 16px;
}

.cg-powered svg {
  width: 28px;
  height: 15px;
  margin: 0 10px 0 9px;
  color: #5a2be0;
}

.cg-powered b {
  color: #000;
  font-family: "Lato", sans-serif;
  font-size: 14.5px;
  font-weight: 800;
}

/* ---------- whitepay ---------- */
.whitepay {
  display: flex;
  width: 1114px;
  background: #fff;
  font: 12.25px/16px "Roboto", sans-serif;
}

.wp-side {
  width: 485px;
  padding: 54px 0 0 40px;
  background: linear-gradient(180deg, #2f6bff 0%, #2563f2 22%, #0d48d6 70%, #043bc9 100%);
}

.wp-side header {
  display: flex;
  height: 95px;
}

.wp-word {
  width: 223px;
  color: #fff;
  font: 500 27px/32px "Inter", sans-serif;
  letter-spacing: 1.9px;
}

.hat {
  position: relative;
}

.hat svg {
  position: absolute;
  top: 4px;
  left: -1px;
  width: 18px;
  height: 6px;
}

.wp-count {
  display: flex;
  justify-content: space-between;
  width: 134px;
  height: 32px;
  margin-top: 2px;
  padding: 6px 12px 0 9px;
  border-radius: 6px;
  background: #fff;
}

.wp-count div {
  display: flex;
  flex-direction: column;
  align-items: center;
}

.wp-count b {
  color: #2c61e8;
  font-size: 10.5px;
  line-height: 12px;
}

.wp-count span {
  color: #9aa0ad;
  font-size: 7.5px;
  line-height: 8px;
}

.wp-count i {
  color: #9aa0ad;
  font-size: 8px;
  line-height: 18px;
}

.receipt {
  width: 354.4px;
  filter: drop-shadow(0 8px 8px rgba(0, 30, 120, 0.25));
}

.receipt-body {
  height: 457px;
  padding: 28px 28px 0;
  border-radius: 14px 14px 0 0;
  background: #fff;
}

.receipt-edge {
  display: block;
  width: 354.4px;
  height: 14px;
}

.receipt-logo {
  display: flex;
  align-items: center;
  justify-content: center;
  gap: 9px;
  height: 167px;
  border: 1px dashed #e4e7ef;
  border-radius: 8px;
  background: #f4f6fb;
}

.wp-badge {
  width: 29px;
  height: 29px;
  border-radius: 6px;
  background: #2a63ea;
  color: #fff;
  font: 600 18px/28px "Inter", sans-serif;
  text-align: center;
}

.wp-badge .hat svg {
  top: -1px;
  left: -1px;
  width: 14px;
  height: 5px;
}

.receipt-logo .wp-word {
  width: auto;
  color: #2a63ea;
  font-size: 21.5px;
  letter-spacing: 1.1px;
}

.receipt-logo .wp-word .hat svg {
  top: 2px;
  width: 15px;
  height: 5px;
}

.receipt h4 {
  margin-top: 24px;
  color: #6f7687;
  font-size: 15px;
  line-height: 20px;
  letter-spacing: 0.35px;
}

.receipt ul {
  display: flex;
  flex-direction: column;
  gap: 17px;
  margin-top: 25px;
  padding-bottom: 29px;
  border-bottom: 1px solid #eceef3;
  color: #7f8593;
}

.receipt li {
  display: flex;
  justify-content: space-between;
}

.receipt li b {
  display: flex;
  align-items: center;
  gap: 9px;
  color: #111;
  font-weight: 400;
}

.receipt li svg {
  width: 13px;
  height: 13px;
}

.receipt-total {
  display: flex;
  justify-content: space-between;
  margin-top: 30px;
  color: #6f7687;
  font-size: 15px;
  font-weight: 700;
  line-height: 20px;
  letter-spacing: 0.4px;
}

.receipt-total b {
  color: #2c61e8;
}

.wp-side footer {
  display: flex;
  align-items: center;
  height: 20px;
  margin: 93px 0 0 44px;
  color: #fff;
  font-size: 13.5px;
  font-weight: 500;
  letter-spacing: 0.3px;
}

.wp-side footer i {
  width: 1px;
  height: 14px;
  margin: 0 15px;
  background: #3f72ea;
}

.help {
  width: 14px;
  height: 14px;
  margin-right: 8px;
}

.play {
  width: 11px;
  height: 12px;
  margin-right: 9px;
}

.wp-form {
  width: 439px;
  margin-left: 150px;
  padding-top: 28px;
  color: #7d8494;
}

.stepper {
  display: flex;
  gap: 7px;
  height: 46px;
  margin-left: 26px;
}

.stepper > i {
  width: 150px;
  height: 4px;
  margin-top: 9px;
  border-radius: 2px;
  background: #e6e9f3;
}

.stepper div {
  display: flex;
  flex-direction: column;
  align-items: center;
  gap: 8px;
  width: 22px;
}

.stepper b {
  width: 22px;
  height: 22px;
  border: 3px solid #e6e9f3;
  border-radius: 50%;
}

.stepper .active {
  color: #2f66ea;
}

.stepper .active b {
  border-color: #2a61e6;
}

.wp-form h3 {
  margin-top: 32px;
  color: #000;
  font: 700 17.5px/22px "Inter", sans-serif;
  letter-spacing: 0.1px;
  text-align: center;
}

.wp-sub {
  margin: 11px 0 24px;
  text-align: center;
}

.wp-form label {
  display: block;
  margin: 24px 0 4px 14px;
}

.wp-form label.l2 {
  margin-top: 24px;
}

.select {
  display: flex;
  align-items: center;
  height: 49.5px;
  padding: 0 17px 0 14px;
  border-radius: 14px;
  background: #f5f7fb;
  color: #111;
  font-size: 14px;
}

.select-icon {
  width: 28.5px;
  height: 28.5px;
  margin-right: 7px;
}

.usdt {
  display: grid;
  place-items: center;
  border-radius: 50%;
  background: #26a17b;
  color: #fff;
}

.usdt svg {
  width: 19px;
  height: 19px;
}

.chevron {
  width: 14px;
  height: 9px;
  margin: 2px 0 0 auto;
  color: #9a9ca2;
}

.rate {
  margin: 16px 0 0 14px;
}

.wp-form p b {
  color: #111;
  font-weight: 400;
}

.rate em {
  color: #2f66ea;
}

.fee {
  display: flex;
  gap: 7px;
  margin: 16px 0 0 14px;
}

.fee b {
  margin-left: -4px;
}

.fee i {
  width: 28px;
  height: 16px;
  border-radius: 8px;
  background: radial-gradient(circle at 20.5px 8px, #fff 4.5px, #2460ea 5px);
}

.crypto {
  height: 105px;
  margin-top: 16px;
  padding-top: 21px;
  border: 1.5px solid #e4e8f4;
  border-radius: 14px;
  text-align: center;
}

.crypto strong {
  display: block;
  margin-top: 10px;
  color: #2a61e6;
  font: 700 28px/32px "Inter", sans-serif;
}

.pay {
  height: 49px;
  margin-top: 28px;
  border-radius: 14px;
  background: linear-gradient(100deg, #2f6bfa 20%, #1556e8 70%);
  box-shadow: 0 3px 8px rgba(42, 97, 230, 0.35);
  color: #fff;
  font-size: 14px;
  font-weight: 500;
  line-height: 50px;
  text-align: center;
}

.wp-icons {
  display: flex;
  align-items: center;
  justify-content: center;
  gap: 16px;
  margin: 30px 3px 0 0;
}

.wp-icons svg {
  width: 18px;
  height: 18px;
}

.wp-icons i {
  width: 4px;
  height: 4px;
  border-radius: 50%;
  background: #a9acb3;
}

/* ---------- acme ---------- */
.acme {
  width: 508px;
  margin-left: -1px;
  background: #fff;
  color: #222631;
  font: 17px/22px "Inter", sans-serif;
}

.acme header {
  height: 217px;
  padding: 36px 25px 0;
  background: #faf9f7;
  box-shadow: inset 0 0 60px #efeeeb;
}

.ac-head {
  display: flex;
  align-items: center;
  gap: 10px;
  height: 32px;
  font-size: 20px;
  font-weight: 500;
}

header .ac-head {
  font-weight: 400;
}

.ac-dot {
  display: grid;
  place-items: center;
  width: 31.5px;
  height: 31.5px;
  border-radius: 50%;
  color: #fff;
  font-weight: 400;
}

.black {
  background: #050505;
}

.green {
  background: #33c56c;
}

.gray {
  background: #b4b4b4;
}

.acme header p {
  margin-top: 26px;
  color: #86868a;
  font-size: 20px;
  line-height: 24px;
}

.acme header strong {
  display: block;
  margin-top: 13px;
  color: #1f2023;
  font-size: 40px;
  font-weight: 600;
  line-height: 44px;
  letter-spacing: -0.6px;
}

.ac-body {
  padding: 26px 26px 0 25px;
}

.ac-edit {
  display: flex;
  align-items: center;
  gap: 7px;
  margin-left: auto;
  padding-bottom: 4px;
  color: #1f6fc9;
  font-size: 17px;
  font-weight: 400;
}

.ac-edit svg {
  width: 19px;
  height: 18px;
}

.acme dl {
  margin-top: 19px;
  border-bottom: 1.5px solid #ebebed;
}

.acme dl div {
  display: flex;
  justify-content: space-between;
  height: 57px;
  padding-top: 24px;
  border-top: 1px solid #f0f0f1;
}

.acme dl div + div {
  height: 64px;
  padding-top: 14px;
}

.acme dt {
  color: #86868a;
  letter-spacing: 0.15px;
}

.acme dd {
  font-weight: 500;
  letter-spacing: 0.15px;
}

.method {
  margin-top: 25px;
}

.ac-methods {
  display: flex;
  flex-direction: column;
  gap: 11.5px;
  margin-top: 20px;
}

.ac-methods li {
  display: flex;
  align-items: center;
  height: 62px;
  padding: 0 14px 0 14px;
  border: 1.5px solid #e6e7ea;
  border-radius: 7px;
  box-shadow: 0 2px 5px rgba(0, 0, 0, 0.04);
  font-size: 18px;
  font-weight: 500;
}

.ac-methods i {
  width: 21px;
  height: 21px;
  margin-right: 22px;
  border: 1px solid #dcdde3;
  border-radius: 50%;
}

.ac-methods li > svg {
  width: 24px;
  height: 24px;
  margin-right: 12px;
}

.cards,
.tiles {
  display: flex;
  gap: 4.5px;
  margin-left: auto;
}

.cards > span {
  display: flex;
  align-items: center;
  justify-content: center;
  width: 29px;
  height: 20px;
  border: 1px solid #e8e8ea;
  border-radius: 3px;
}

.cards svg {
  width: 20px;
  height: 14px;
}

.cards .visa {
  color: #251a72;
  font-size: 8.5px;
  font-style: italic;
  font-weight: 900;
}

.cards .amex {
  border-color: #1f72cd;
  background: #1f72cd;
  color: #e4f0ff;
  font-size: 8.5px;
  font-weight: 700;
  letter-spacing: -0.4px;
}

.jcb b {
  width: 5.7px;
  height: 13px;
  border-radius: 2px 0;
  background: #0b62b0;
  color: #fff;
  font-size: 7px;
  line-height: 13px;
  text-align: center;
}

.jcb b + b {
  background: #d9143f;
}

.jcb b + b + b {
  background: #3fa535;
}

.tiles {
  gap: 4px;
}

.tiles svg {
  width: 21px;
  height: 21px;
}

.white {
  color: #fff;
}

.ink {
  color: #333;
}
</style>
